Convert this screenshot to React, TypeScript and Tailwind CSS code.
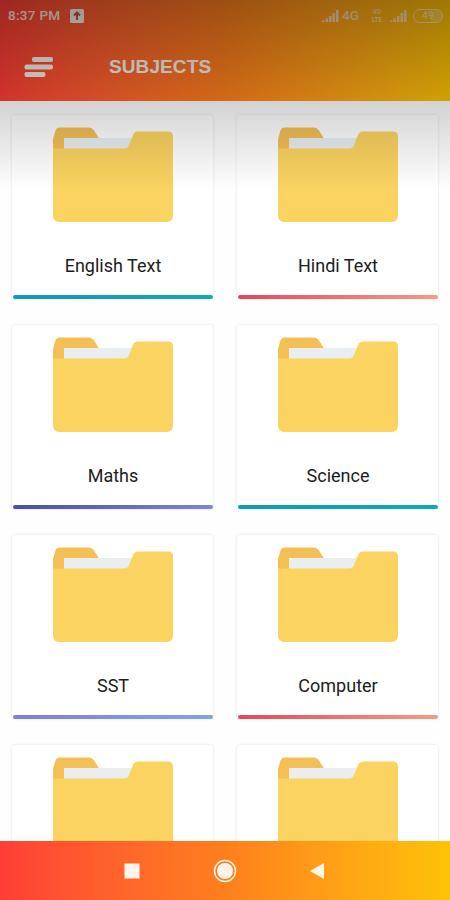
const subjects = [
  { name: "English Text", bar: "from-[#1298b8] to-[#12aaae]" },
  { name: "Hindi Text", bar: "from-[#e0475c] to-[#f39a86]" },
  { name: "Maths", bar: "from-[#4c4fa6] to-[#7f83dc]" },
  { name: "Science", bar: "from-[#1298b8] to-[#12aaae]" },
  { name: "SST", bar: "from-[#7f7fd5] to-[#7fa4e4]" },
  { name: "Computer", bar: "from-[#e0475c] to-[#f39a86]" },
  { name: "", bar: "from-[#4c4fa6] to-[#7f83dc]" },
  { name: "", bar: "from-[#1298b8] to-[#12aaae]" },
]

export default function App() {
  return (
    <div className="relative flex h-[900px] w-[450px] flex-col overflow-hidden bg-[#fefefe] font-['Roboto',sans-serif]">
      <header className="h-[101px] shrink-0 bg-linear-to-r from-[#ff3d35] via-[#fe7f1c] to-[#fdc206]">
        <StatusBar />
        <div className="flex h-[69px] items-center pl-6">
          <MenuIcon />
          <h1 className="ml-[55px] font-['Liberation_Sans',sans-serif] text-[19px] leading-none font-bold tracking-[0.1px] text-[#fdf5f0]">
            SUBJECTS
          </h1>
        </div>
      </header>

      <main className="grid min-h-0 flex-1 grid-cols-2 content-start gap-x-6 gap-y-[26px] overflow-hidden pt-[14px] pr-3 pl-3">
        {subjects.map((subject, i) => (
          <SubjectCard key={i} name={subject.name} bar={subject.bar} />
        ))}
      </main>

      <NavBar />

      {/* shade falling from the top edge over the header and first row */}
      <div className="pointer-events-none absolute inset-x-0 top-0 h-[190px] bg-linear-to-b from-black/38 via-black/17 via-54% to-transparent" />
    </div>
  )
}

function SubjectCard({ name, bar }: { name: string; bar: string }) {
  return (
    <div className="flex h-[184px] flex-col items-center rounded-[3px] bg-white pt-3 pl-px shadow-[0_0_3px_rgba(0,0,0,0.13)]">
      <FolderIcon />
      <span className="mt-8 h-6 text-[18px] leading-6 text-[#1c1c1c]">{name}</span>
      <div className={`mt-auto h-1 w-full rounded-full bg-linear-to-r ${bar}`} />
    </div>
  )
}

function FolderIcon() {
  return (
    <svg width="120" height="95" viewBox="0 0 120 95" className="shrink-0">
      <path
        d="M0 30V12L2.500 3.500Q3.500 .5 7 .5H36Q39 .5 41 3.500L47 13V30Z"
        fill="#f4bf55"
      />
      <path d="M11 11H86V26H11Z" fill="#e9eef1" />
      <path
        d="M0 21.500H71Q74.500 21.500 76 18L80 8Q81.500 4.500 85 4.500H115Q120 4.500 120 9.500V88.500Q120 95 113.500 95H6.500Q0 95 0 88.500Z"
        fill="#fad360"
      />
    </svg>
  )
}

function MenuIcon() {
  return (
    <svg width="30" height="22" viewBox="0 0 30 22" fill="#fdf3ec">
      <rect x="8" y="1" width="21" height="5" rx="2" />
      <rect x="0.500" y="8.500" width="28.500" height="5" rx="2" />
      <rect x="0.500" y="16" width="21" height="5" rx="2" />
    </svg>
  )
}

function StatusBar() {
  return (
    <div className="flex h-8 items-center pl-2 pr-[7px] text-[13.5px] font-medium leading-none text-[#fbe6dc]">
      <span className="w-[54px] whitespace-nowrap tracking-[0.3px]">8:37 PM</span>
      <svg width="14" height="14" viewBox="0 0 14 14" className="ml-2">
        <rect width="14" height="14" rx="1.500" fill="#fbeee8" />
        <path
          d="M7 11V4M4 6.500L7 3.500L10 6.500"
          fill="none"
          stroke="#bd5340"
          strokeWidth="2"
        />
      </svg>
      <div className="ml-auto flex items-center opacity-75">
        <SignalIcon />
        <span className="ml-[3px] w-[18px] text-[13.5px]">4G</span>
        <div className="ml-[9px] flex w-4 flex-col items-center gap-px text-[6.5px] leading-[7px]">
          <span>VO</span>
          <span>LTE</span>
        </div>
        <span className="ml-[5px]">
          <SignalIcon />
        </span>
        <div className="ml-[6px] flex h-[14px] w-[30px] items-center justify-center rounded-full border-[1.500px] border-[#fbe6dc] bg-linear-to-r from-transparent from-60% to-[#fbe6dc]/35 to-60% text-[10px]">
          49
        </div>
      </div>
    </div>
  )
}

function SignalIcon() {
  return (
    <svg width="17" height="14" viewBox="0 0 17 14" fill="#fbe6dc">
      <rect x="0" y="11.500" width="2.500" height="1.500" />
      <rect x="3.500" y="9.500" width="2.500" height="3.500" />
      <rect x="7" y="7" width="2.500" height="6" />
      <rect x="10.500" y="4" width="2.500" height="9" />
      <rect x="14" y="1" width="2.500" height="12" />
    </svg>
  )
}

function NavBar() {
  return (
    <nav className="flex h-[59px] shrink-0 items-center bg-linear-to-r from-[#ff3d35] via-[#fe7f1c] to-[#fdc206] pl-[124px]">
      <svg width="16" height="16" viewBox="0 0 16 16" className="mt-px">
        <rect x="0.500" y="0.500" width="15" height="15" fill="#fdf5ec" />
      </svg>
      <svg width="24" height="24" viewBox="0 0 24 24" className="ml-[73px] mt-px">
        <circle cx="12" cy="12" r="10.500" fill="none" stroke="#fdf5ec" strokeWidth="1.500" />
        <circle cx="12" cy="12" r="8" fill="#fdf5ec" />
      </svg>
      <svg width="16" height="18" viewBox="0 0 16 18" className="ml-[72px] mt-px">
        <path d="M15 1V17L1 9Z" fill="#fdf5ec" />
      </svg>
    </nav>
  )
}
